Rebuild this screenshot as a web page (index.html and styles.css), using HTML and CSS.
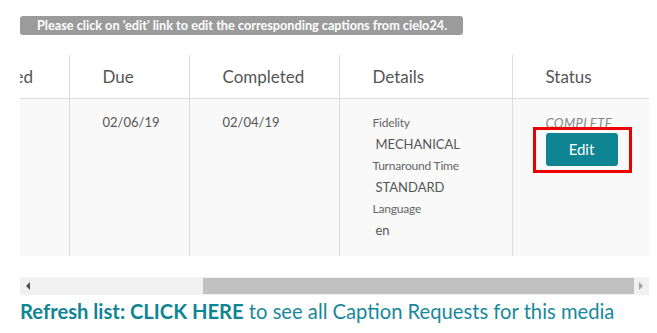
FILE: index.html
```html
<!DOCTYPE html>
<html lang="en">
<head>
<meta charset="utf-8">
<title>Caption Requests</title>
<link rel="stylesheet" href="styles.css">
</head>
<body>
<div class="page">
  <div class="banner">Please click on 'edit' link to edit the corresponding captions from cielo24.</div>
  <div class="table-wrap">
    <table class="requests">
      <colgroup>
        <col class="c-req"><col class="c-due"><col class="c-done"><col class="c-details"><col class="c-status">
      </colgroup>
      <thead>
        <tr>
          <th>Requested</th>
          <th>Due</th>
          <th>Completed</th>
          <th>Details</th>
          <th>Status</th>
        </tr>
      </thead>
      <tbody>
        <tr>
          <td>02/01/19</td>
          <td>02/06/19</td>
          <td>02/04/19</td>
          <td>
            <div class="label">Fidelity</div>
            <div class="value">MECHANICAL</div>
            <div class="label">Turnaround Time</div>
            <div class="value">STANDARD</div>
            <div class="label">Language</div>
            <div class="value">en</div>
          </td>
          <td>
            <div class="status">COMPLETE</div>
            <div class="edit-holder">
              <a class="edit-btn" href="#">Edit</a>
              <span class="highlight"></span>
            </div>
          </td>
        </tr>
      </tbody>
    </table>
  </div>
  <div class="hscroll">
    <span class="arrow left"></span>
    <div class="track"><div class="thumb"></div></div>
    <span class="arrow right"></span>
  </div>
  <p class="refresh"><a href="#"><strong>Refresh list: CLICK HERE</strong> to see all Caption Requests for this media</a></p>
</div>
</body>
</html>
```

FILE: styles.css
```css
html, body {
  margin: 0;
  padding: 0;
  background: #ffffff;
}
body {
  font-family: Lato, "Open Sans", "Liberation Sans", sans-serif;
  color: #555;
}
.page {
  padding: 16px 8px 0 20px;
}
.banner {
  width: 426px;
  height: 19px;
  line-height: 19px;
  padding-left: 17px;
  background: #9b9b9b;
  border-radius: 3px;
  color: #fff;
  font-weight: 700;
  font-size: 12.7px;
  letter-spacing: 0;
  white-space: nowrap;
}
.table-wrap {
  margin-top: 20px;
  width: 629px;
  overflow: hidden;
}
.requests {
  border-collapse: collapse;
  table-layout: fixed;
  width: 728px;
  margin-left: -99px;
}
.c-req { width: 148px; }
.c-due { width: 120px; }
.c-done { width: 150px; }
.c-details { width: 173px; }
.c-status { width: 137px; }
.requests th,
.requests td {
  border-left: 1px solid #dddddd;
  text-align: left;
  vertical-align: top;
  padding: 0 0 0 33px;
}
.requests th:first-child,
.requests td:first-child {
  border-left: none;
}
.requests th {
  height: 43px;
  font-weight: normal;
  font-size: 17px;
  color: #555;
  vertical-align: middle;
  border-bottom: 1px solid #dddddd;
  padding-top: 0;
}
.requests td {
  background: #f9f9f9;
  height: 157px;
  box-sizing: border-box;
  padding-top: 15px;
  font-size: 13px;
  color: #555;
}
.label {
  font-size: 12px;
  color: #666;
  line-height: 21px;
  letter-spacing: -0.2px;
}
.value {
  font-size: 13px;
  color: #555;
  line-height: 22px;
  padding-left: 3px;
}
.requests td:nth-child(4) {
  padding-top: 13px;
}
.status {
  font-size: 13px;
  font-style: italic;
  color: #888;
  line-height: 14px;
  letter-spacing: 0.4px;
  margin-top: 2px;
}
.edit-holder {
  position: relative;
  margin-top: 3px;
  width: 72px;
}
.edit-btn {
  display: block;
  width: 72px;
  height: 33px;
  line-height: 33px;
  text-align: center;
  background: #0f8594;
  color: #fff;
  border-radius: 3px;
  font-size: 15px;
  text-decoration: none;
}
.highlight {
  position: absolute;
  left: -13px;
  top: -6px;
  width: 93px;
  height: 40px;
  border: 3px solid #ee0000;
}
.hscroll {
  margin-top: 21px;
  width: 629px;
  height: 18px;
  background: #f1f1f1;
  display: flex;
  align-items: center;
}
.arrow {
  width: 0;
  height: 0;
  border-top: 4px solid transparent;
  border-bottom: 4px solid transparent;
}
.arrow.left {
  border-right: 4px solid #505050;
  margin: 0 5px 0 6px;
}
.arrow.right {
  border-left: 4px solid #a3a3a3;
  margin: 0 6px 0 5px;
}
.track {
  flex: 1;
  height: 18px;
  display: flex;
  align-items: center;
  padding-left: 168px;
}
.thumb {
  flex: 1;
  height: 16px;
  background: #c1c1c1;
}
.refresh {
  margin: 4px 0 0 0;
  font-size: 20.2px;
  line-height: 25px;
  letter-spacing: 0;
}
.refresh a {
  color: #17899a;
  text-decoration: none;
}
.refresh strong {
  font-weight: bold;
  color: #0f8594;
}
```
